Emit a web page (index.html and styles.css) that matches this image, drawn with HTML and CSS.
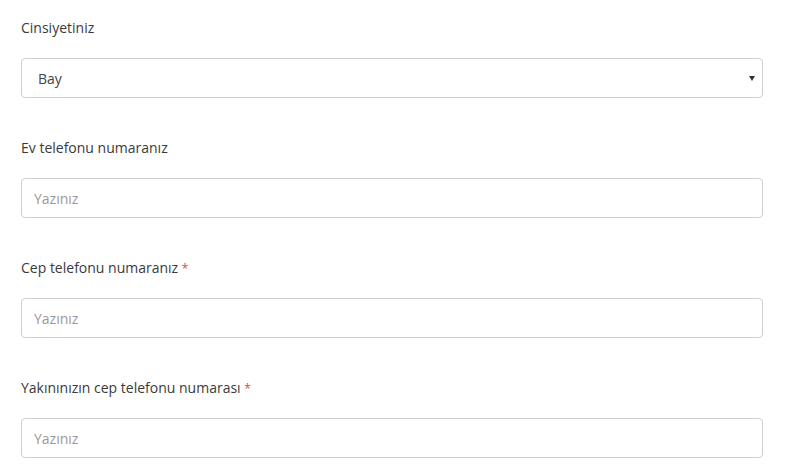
FILE: index.html
```html
<!DOCTYPE html>
<html lang="tr">
<head>
<meta charset="utf-8">
<title>Form</title>
<link rel="stylesheet" href="styles.css">
</head>
<body>
<form class="form">
  <div class="group">
    <label class="label" for="gender">Cinsiyetiniz</label>
    <div class="select-wrap">
      <select id="gender" class="control select">
        <option>Bay</option>
        <option>Bayan</option>
      </select>
    </div>
  </div>
  <div class="group">
    <label class="label" for="home">Ev telefonu numaranız</label>
    <input id="home" class="control" type="text" placeholder="Yazınız">
  </div>
  <div class="group">
    <label class="label" for="mobile">Cep telefonu numaranız <span class="req">*</span></label>
    <input id="mobile" class="control" type="text" placeholder="Yazınız">
  </div>
  <div class="group">
    <label class="label" for="relative">Yakınınızın cep telefonu numarası <span class="req">*</span></label>
    <input id="relative" class="control" type="text" placeholder="Yazınız">
  </div>
</form>
</body>
</html>
```

FILE: styles.css
```css
html, body {
  margin: 0;
  padding: 0;
  background: #ffffff;
}

body {
  font-family: "Open Sans", "Liberation Sans", sans-serif;
  font-size: 14px;
  color: #333;
}

.form {
  width: 742px;
  padding: 18px 0 0 21px;
}

.group {
  margin-bottom: 40px;
}

.label {
  display: block;
  height: 20px;
  line-height: 20px;
  margin-bottom: 20px;
  color: #3a3a3a;
}

.req {
  font-size: 12px;
  line-height: 0;
  color: #f2403a;
}

.control {
  display: block;
  box-sizing: border-box;
  width: 100%;
  height: 40px;
  margin: 0;
  padding: 0 12px;
  border: 1px solid #cfcfcf;
  border-radius: 4px;
  background: #fff;
  font-family: "Open Sans", "Liberation Sans", sans-serif;
  font-size: 14px;
  color: #555;
  outline: none;
}

.control::placeholder {
  color: #999;
  opacity: 1;
}

.select-wrap {
  position: relative;
}

.select {
  -webkit-appearance: none;
  appearance: none;
  padding-left: 16px;
  color: #444;
}

.select-wrap::after {
  content: "";
  position: absolute;
  right: 8px;
  top: 18px;
  width: 0;
  height: 0;
  border-left: 3.5px solid transparent;
  border-right: 3.5px solid transparent;
  border-top: 5px solid #333;
  pointer-events: none;
}
```
